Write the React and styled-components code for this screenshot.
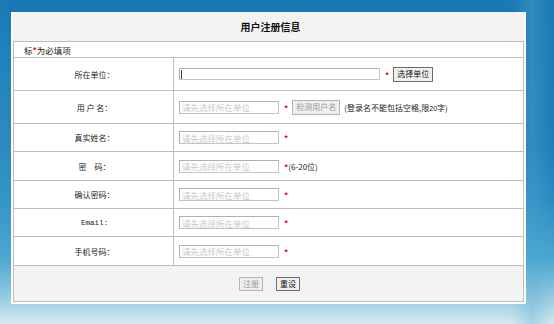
import styled, { createGlobalStyle } from "styled-components";

const GlobalStyle = createGlobalStyle`
  html, body {
    margin: 0;
    padding: 0;
  }
  body {
    width: 554px;
    height: 324px;
    overflow: hidden;
    font-family: "Noto Sans CJK SC", "Liberation Sans", sans-serif;
    background:
      radial-gradient(ellipse 120px 260px at -40px 150px, rgba(120, 200, 235, 0.35), transparent 70%),
      linear-gradient(to right, transparent 92%, rgba(90, 170, 215, 0.35) 96%, transparent),
      linear-gradient(to bottom, #1a78b3 0%, #1c7db8 45%, #2a8cc2 62%, #49a6d0 80%, #9fcfe3 93%, #d6eaf2 100%);
  }
`;

const Page = styled.div`
  padding: 12px 0 0 11px;
`;

const Panel = styled.div`
  width: 511px;
  background: #f3f3f3;
  border: 2px solid #fff;
  border-top: 0;
`;

const Title = styled.div`
  height: 29px;
  display: flex;
  align-items: center;
  justify-content: center;
  font-size: 10px;
  font-weight: bold;
  color: #111;
  padding-left: 4px;
`;

const Table = styled.table`
  width: 100%;
  border-collapse: collapse;
  border: 1px solid #bdbdbd;
  background: #fff;
  font-size: 8px;
  color: #222;
`;

const Row = styled.tr`
  height: ${(p) => p.$h}px;
  border-top: 1px solid #bdbdbd;
`;

const Note = styled.td`
  padding: 0 0 0 10px;
  height: 15px;
  font-size: 8.5px;
  color: #222;
`;

const Label = styled.td`
  width: 157px;
  text-align: center;
  border-right: 1px solid #bdbdbd;
  padding: 0 0 0 2px;
  font-family: ${(p) => (p.$mono ? `"Liberation Mono", monospace` : "inherit")};
  font-size: ${(p) => (p.$mono ? "7.5px" : "8px")};
  white-space: pre;
`;

const Field = styled.td`
  padding: 0 0 0 5px;
`;

const Line = styled.div`
  display: flex;
  align-items: center;
  gap: 3px;
`;

const Input = styled.input`
  box-sizing: border-box;
  width: ${(p) => p.$w}px;
  height: ${(p) => p.$ht || 13}px;
  margin: 0;
  padding: 0 2px;
  border: 1px solid #c4c4c4;
  border-top-color: #b0b0b0;
  border-left-color: #b0b0b0;
  font-family: "Noto Sans CJK SC", sans-serif;
  font-size: 8.5px;
  color: #333;
  outline: none;
  background: ${(p) =>
    p.$caret
      ? "linear-gradient(to right, transparent 1px, #444 1px, #444 2px, transparent 2px) no-repeat 0 1px / 100% 9px, #fff"
      : "#fff"};
  &::placeholder {
    color: #c9c9c9;
  }
`;

const Star = styled.span`
  color: #f00;
  font-size: 8.5px;
  font-weight: bold;
  line-height: 1;
  margin: 2px 0 0 ${(p) => (p.$inline ? 0 : 2)}px;
`;

const Button = styled.button`
  height: ${(p) => p.$ht || 15}px;
  margin: 0 0 0 ${(p) => p.$ml || 0}px;
  padding: 0 3px;
  font-family: "Noto Sans CJK SC", sans-serif;
  font-size: 8px;
  line-height: 1;
  color: ${(p) => (p.disabled ? "#9a9a9a" : "#111")};
  background: ${(p) => (p.disabled ? "#eeeeee" : "#f1f1f1")};
  border: 1px solid ${(p) => (p.disabled ? "#b4b4b4" : "#6b6b6b")};
  border-radius: 0;
`;

const Hint = styled.span`
  font-size: 8px;
  color: #222;
  margin-left: ${(p) => p.$ml || 0}px;
  & b {
    font-weight: normal;
    font-family: "Liberation Sans", sans-serif;
    font-size: 7px;
  }
`;

const Footer = styled.td`
  background: #f4f4f4;
  height: 35px;
  text-align: center;
  padding: 0 0 0 2px;
`;

const FooterButtons = styled.div`
  display: flex;
  justify-content: center;
  gap: 13px;
`;

const fields = [
  { label: "真实姓名：", h: 28 },
  { label: "密　码：", h: 29, hint: "(6-20位)" },
  { label: "确认密码：", h: 28 },
  { label: "Email:", h: 28, mono: true },
  { label: "手机号码：", h: 29 },
];

export default function App() {
  return (
    <>
      <GlobalStyle />
      <Page>
        <Panel>
          <Title>用户注册信息</Title>
          <Table>
            <tbody>
              <tr>
                <Note colSpan={2}>
                  标<Star $inline>*</Star>为必填项
                </Note>
              </tr>
              <Row $h={33}>
                <Label>所在单位：</Label>
                <Field>
                  <Line>
                    <Input $w={201} $ht={12} $caret />
                    <Star>*</Star>
                    <Button $ml={1}>选择单位</Button>
                  </Line>
                </Field>
              </Row>
              <Row $h={33}>
                <Label>用 户 名：</Label>
                <Field>
                  <Line>
                    <Input $w={100} placeholder="请先选择所在单位" />
                    <Star>*</Star>
                    <Button $ml={1} disabled>
                      检测用户名
                    </Button>
                    <Hint $ml={1}>
                      (登录名不能包括空格,限<b>20</b>字)
                    </Hint>
                  </Line>
                </Field>
              </Row>
              {fields.map((f) => (
                <Row key={f.label} $h={f.h}>
                  <Label $mono={f.mono}>{f.label}</Label>
                  <Field>
                    <Line>
                      <Input $w={100} placeholder="请先选择所在单位" />
                      <Star>*</Star>
                      {f.hint && <Hint $ml={-3}>{f.hint}</Hint>}
                    </Line>
                  </Field>
                </Row>
              ))}
              <Row $h={36}>
                <Footer colSpan={2}>
                  <FooterButtons>
                    <Button disabled $ht={14}>
                      注册
                    </Button>
                    <Button $ht={14}>重设</Button>
                  </FooterButtons>
                </Footer>
              </Row>
            </tbody>
          </Table>
        </Panel>
      </Page>
    </>
  );
}
